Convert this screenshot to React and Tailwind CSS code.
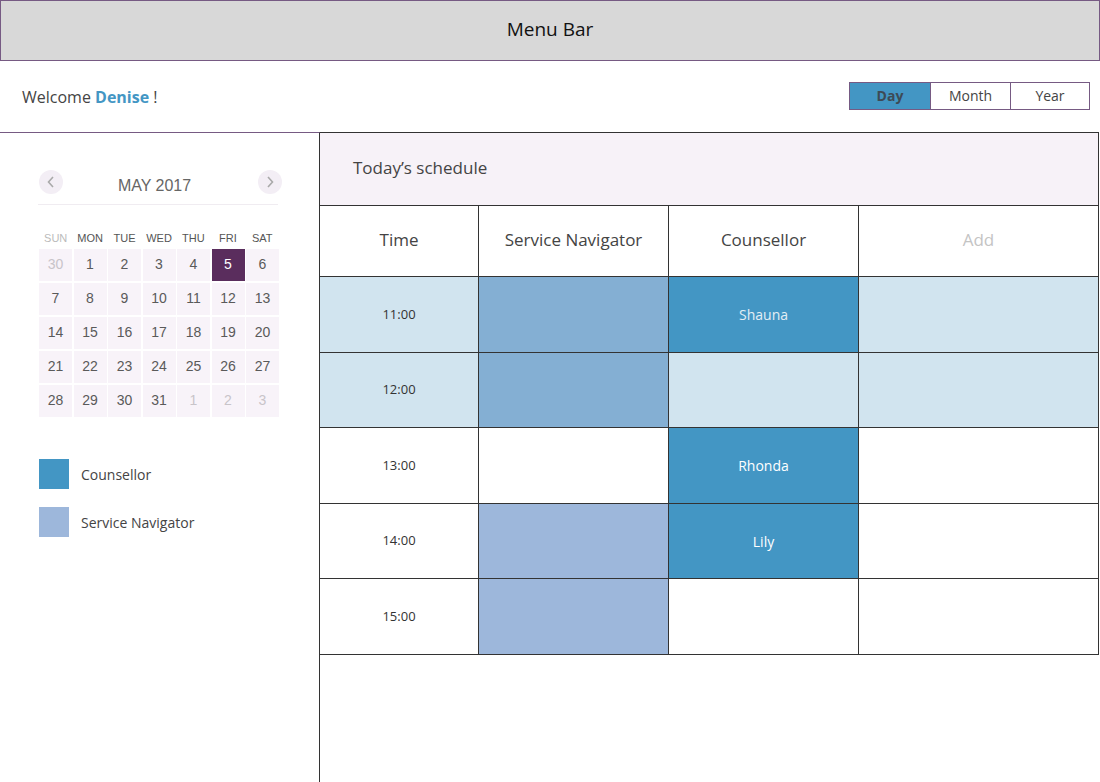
import React from "react";

const font = { fontFamily: '"Open Sans", "Noto Sans", sans-serif' };

const days = ["SUN", "MON", "TUE", "WED", "THU", "FRI", "SAT"];
const weeks = [
  [30, 1, 2, 3, 4, 5, 6],
  [7, 8, 9, 10, 11, 12, 13],
  [14, 15, 16, 17, 18, 19, 20],
  [21, 22, 23, 24, 25, 26, 27],
  [28, 29, 30, 31, 1, 2, 3],
];

const rows = [
  { time: "11:00", bg: "bg-[#d1e4ef]", sn: "bg-[#84afd3]", c: "bg-[#4396c4]", name: "Shauna", light: true },
  { time: "12:00", bg: "bg-[#d1e4ef]", sn: "bg-[#84afd3]", c: "bg-[#d1e4ef]", name: "" },
  { time: "13:00", bg: "bg-white", sn: "bg-white", c: "bg-[#4396c4]", name: "Rhonda" },
  { time: "14:00", bg: "bg-white", sn: "bg-[#9db7db]", c: "bg-[#4396c4]", name: "Lily" },
  { time: "15:00", bg: "bg-white", sn: "bg-[#9db7db]", c: "bg-white", name: "" },
];

function MiniCalendar() {
  return (
    <div className="pl-[39px] pt-[37px] w-[280px]">
      <div className="flex items-center justify-between h-[24px]">
        <span className="w-[24px] h-[24px] rounded-full bg-[#f3eef5] flex items-center justify-center text-[#aaa]">
          <svg width="8" height="12" viewBox="0 0 8 12"><path d="M6 1 L1.5 6 L6 11" fill="none" stroke="#a9a9a9" strokeWidth="1.6" /></svg>
        </span>
        <span className="text-[16px] text-[#666] mt-[8px] mr-[12px]" style={{ fontFamily: '"Liberation Sans", Arial, sans-serif' }}>MAY 2017</span>
        <span className="w-[24px] h-[24px] rounded-full bg-[#f3eef5] flex items-center justify-center mr-[-2px]">
          <svg width="8" height="12" viewBox="0 0 8 12"><path d="M2 1 L6.5 6 L2 11" fill="none" stroke="#a9a9a9" strokeWidth="1.6" /></svg>
        </span>
      </div>
      <div className="mt-[10px] border-t border-[#f0ecf1] w-[240px] ml-[-1px]" />
      <div style={{ fontFamily: '"Liberation Sans", Arial, sans-serif' }} className="w-[240px] mt-[25px]">
        <div className="grid grid-cols-7 gap-x-[1px] text-[11px] text-[#555] text-center mb-[2px]">
          {days.map((d, i) => (
            <span key={d} className={i === 0 ? "text-[#bbb]" : ""}>{d}</span>
          ))}
        </div>
        <div className="grid grid-cols-7 gap-[1.5px]">
          {weeks.map((w, wi) =>
            w.map((d, di) => {
              const muted = (wi === 0 && d > 20) || (wi === 4 && d < 10);
              const sel = wi === 0 && d === 5;
              return (
                <div
                  key={wi + "-" + di}
                  className={`h-[32.5px] flex items-center justify-center text-[14px] ${
                    sel ? "bg-[#5a2d5d] text-white" : "bg-[#f8f3f9] " + (muted ? "text-[#c8c4c9]" : "text-[#5a5a5a]")
                  }`}
                >
                  {d}
                </div>
              );
            })
          )}
        </div>
      </div>
      <div className="mt-[42px] flex flex-col gap-[18px]" style={font}>
        <div className="flex items-center gap-[12px]">
          <span className="w-[30px] h-[30px] bg-[#4396c4]" />
          <span className="text-[14px] text-[#444]">Counsellor</span>
        </div>
        <div className="flex items-center gap-[12px]">
          <span className="w-[30px] h-[30px] bg-[#9db7db]" />
          <span className="text-[14px] text-[#444]">Service Navigator</span>
        </div>
      </div>
    </div>
  );
}

function Schedule() {
  const cell = "flex items-center justify-center border-r border-b border-[#333]";
  return (
    <div className="w-[779px] border-r border-[#333]" style={font}>
      <div className="h-[73px] bg-[#f7f2f8] border-b border-[#333] flex items-center pl-[33px] pb-[2px] text-[17px] text-[#444]">
        Today’s schedule
      </div>
      <div className="grid grid-cols-[159px_190px_190px_1fr] text-[17px]">
        <div className={`${cell} h-[71px] pb-[3px] text-[#444]`}>Time</div>
        <div className={`${cell} h-[71px] pb-[3px] text-[#444]`}>Service Navigator</div>
        <div className={`${cell} h-[71px] pb-[3px] text-[#444]`}>Counsellor</div>
        <div className={`${cell} h-[71px] pb-[3px] text-[#c4c4c4] border-r-0`}>Add</div>
        {rows.map((r) => (
          <React.Fragment key={r.time}>
            <div className={`${cell} h-[75.6px] ${r.bg} text-[13px] text-[#333]`}>{r.time}</div>
            <div className={`${cell} h-[75.6px] ${r.sn}`} />
            <div className={`${cell} h-[75.6px] ${r.c} text-[14px] ${r.light ? "text-[#e3eef5]" : "text-white"}`}>
              {r.name}
            </div>
            <div className={`${cell} h-[75.6px] ${r.bg} border-r-0`} />
          </React.Fragment>
        ))}
      </div>
    </div>
  );
}

export default function App() {
  return (
    <div className="w-[1100px] h-[782px] flex flex-col bg-white overflow-hidden" style={font}>
      <div className="h-[61px] bg-[#d8d8d8] border border-[#765a83] flex items-center justify-center pb-[3px] text-[19px] text-[#111] shrink-0">
        Menu Bar
      </div>
      <div className="h-[71px] flex items-center justify-between pl-[22px] pr-[10px] shrink-0">
        <p className="text-[16px] text-[#444]">
          Welcome <span className="font-bold text-[#4396c4]">Denise</span> !
        </p>
        <div className="flex h-[28px] border border-[#765a83] text-[14px] text-[#444] mt-[-2px]">
          <span className="w-[80px] bg-[#4396c4] flex items-center justify-center font-bold text-[#3d4a55]">Day</span>
          <span className="w-[80px] border-l border-[#765a83] flex items-center justify-center">Month</span>
          <span className="w-[79px] border-l border-[#765a83] flex items-center justify-center">Year</span>
        </div>
      </div>
      <div className="flex flex-1">
        <div className="w-[320px] border-t border-[#765a83] border-r border-r-[#333]">
          <MiniCalendar />
        </div>
        <div className="border-t border-[#333]">
          <Schedule />
        </div>
      </div>
    </div>
  );
}
